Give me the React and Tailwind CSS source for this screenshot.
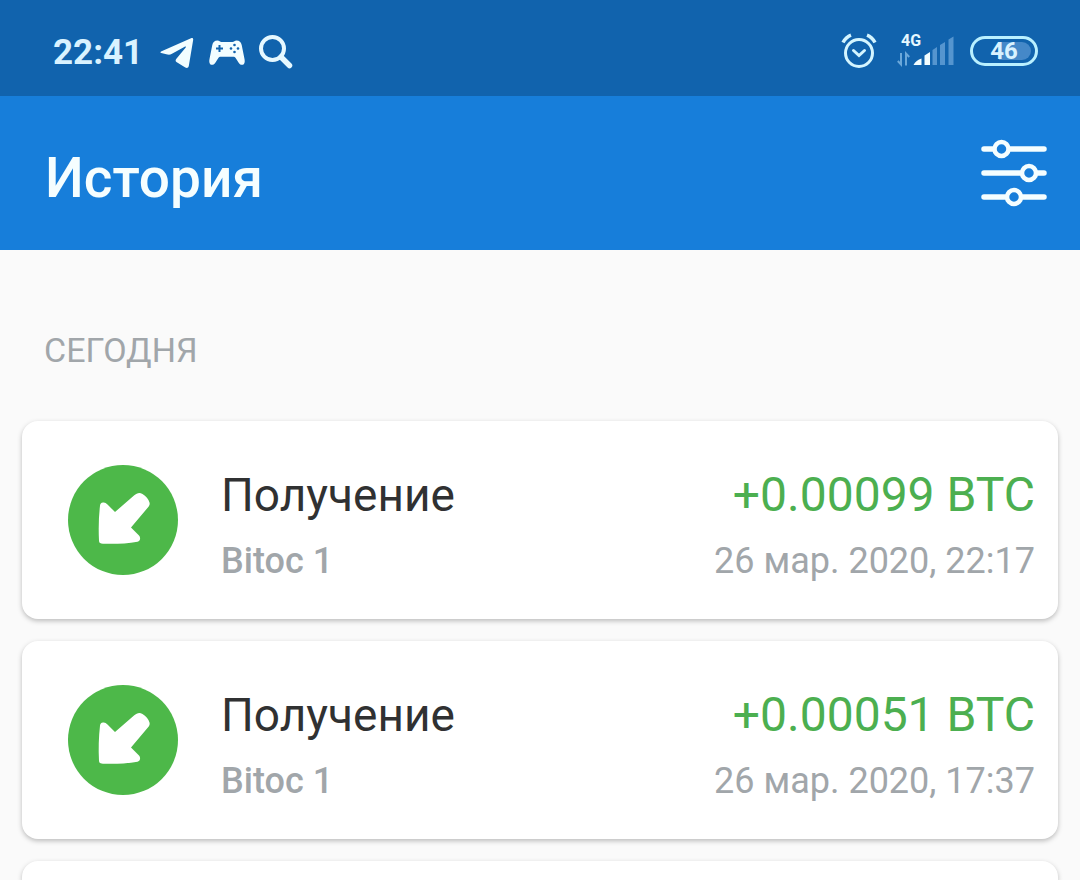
const transactions = [
  { id: 1, title: 'Получение', wallet: 'Bitoc 1', amount: '+0.00099 BTC', date: '26 мар. 2020, 22:17' },
  { id: 2, title: 'Получение', wallet: 'Bitoc 1', amount: '+0.00051 BTC', date: '26 мар. 2020, 17:37' },
]

function TelegramIcon() {
  return (
    <svg className="h-8 w-9" viewBox="0 0 36 32" fill="#f2fdff" aria-hidden="true">
      <path d="M1 14.500 31 1.200c1.500-.6 2.300 0 2.200 1.600L28.800 29c-.4 1.900-1.900 2.400-3.500 1.500l-8.500-5.200c-1.500-1-1.500-2.200-.4-3.600l9.300-11.200c.5-.9-.1-1.300-1-.8L12 16.700c-1.500 1-3 1.200-4.600.9L1.200 16.100c-1-.3-1-1.200-.2-1.600Z" />
    </svg>
  )
}

function GamepadIcon() {
  return (
    <svg className="h-8 w-9" viewBox="0 0 36 32" aria-hidden="true">
      <path
        fill="#f2fdff"
        d="M8.500 3.500c1.800 0 2.500 1.500 4 1.500h11c1.500 0 2.200-1.500 4-1.500 3 0 4.500 1.500 5.200 4.500L35.500 22c.8 4-.5 5.800-2.500 5.800-1.600 0-2.500-.8-3.500-2.300l-2.700-4.300c-.7-1-1.500-1.400-2.600-1.400H11.800c-1.100 0-1.900.4-2.600 1.400l-2.700 4.300C5.500 27 4.600 27.800 3 27.800c-2 0-3.300-1.800-2.500-5.800L3.300 8c.7-3 2.200-4.500 5.200-4.500Z"
      />
      <path d="M10.500 8v7M7 11.500h7" stroke="#1163ad" strokeWidth="2" />
      <g fill="#1163ad">
        <circle cx="25.500" cy="8" r="1.300" />
        <circle cx="25.500" cy="15" r="1.300" />
        <circle cx="22" cy="11.500" r="1.300" />
        <circle cx="29" cy="11.500" r="1.300" />
      </g>
    </svg>
  )
}

function SearchIcon() {
  return (
    <svg className="h-9 w-9" viewBox="0 0 36 36" fill="none" stroke="#e6f8ff" aria-hidden="true">
      <circle cx="14.500" cy="13.500" r="11.500" strokeWidth="4" />
      <path d="m23 22 8.500 8.500" strokeWidth="5.500" strokeLinecap="round" />
    </svg>
  )
}

function AlarmIcon() {
  return (
    <svg className="h-9 w-9" viewBox="0 0 36 36" fill="none" stroke="#d4f5ff" strokeWidth="3" aria-hidden="true">
      <circle cx="18" cy="20" r="13.500" />
      <path d="M12.500 17.500 18 22.500l5.500-5" strokeLinecap="round" />
      <path d="M2 9.500C4 6 6.500 3.500 10 2.200M34 9.500C32 6 29.500 3.500 26 2.200" strokeWidth="3.500" />
    </svg>
  )
}

function SignalIcon() {
  return (
    <div className="relative mr-[15px] ml-5">
      <svg className="h-9 w-[58px]" viewBox="0 0 58 36" aria-hidden="true">
        <path d="M4 20v11.500L.8 28M9 32.500V20.500l3.200 3.500" fill="none" stroke="#6ba8da" strokeWidth="2" />
        <path d="M16.500 32c1.500-3 4.500-5.500 8-6.500V32Z" fill="#f2fdff" />
        <path d="M27.500 22.500 33 19v13h-5.500Z" fill="#f2fdff" />
        <path d="m35.500 17 4.500-3v18h-4.500ZM43 12l5-3v23h-5ZM51.500 6.500l5-3V32h-5Z" fill="#5595cf" />
      </svg>
      <span className="absolute -top-1 left-1 text-base leading-6 font-bold text-[#e6f8ff]">4G</span>
    </div>
  )
}

function FilterIcon() {
  return (
    <svg className="h-[72px] w-[72px]" viewBox="0 0 72 72" stroke="#f5feff" strokeWidth="5.500" strokeLinecap="round" aria-hidden="true">
      <path d="M6 13h60M6 37h60M6 61h60" />
      <g fill="#177eda" strokeWidth="4.500">
        <circle cx="23.500" cy="13" r="7" />
        <circle cx="51" cy="37" r="7" />
        <circle cx="36" cy="61" r="7" />
      </g>
    </svg>
  )
}

function ReceiveIcon() {
  return (
    <svg className="h-[110px] w-[110px] shrink-0" viewBox="0 0 110 110" aria-hidden="true">
      <circle cx="55" cy="55" r="55" fill="#4db849" />
      <path
        fill="#fff"
        d="M35 37.500c1.500-.4 3 .3 4.500 2l7.500 7.500L66 30.500c3-2.500 5.500-3.300 8.500-1.500 3.500 2 6 5 7 8.500.5 1.800 0 3-1.200 4.500L63 62.500l8 8c1.800 2 1.500 5.500-1.500 6.200-11 2-22 2.300-34.500 2-2.500 0-4-.8-4-3-.6-12-.3-24 1-35 .2-1.800 1-2.900 3-3.200Z"
      />
    </svg>
  )
}

function StatusBar() {
  return (
    <div className="flex h-24 shrink-0 items-center justify-between bg-[#1163ad] pt-1.5 pr-[42px] pl-[53px] text-[#d9f2ff]">
      <div className="flex items-center gap-[13px] pt-[3px]">
        <span className="mr-1 text-[35px] leading-10 font-bold">22:41</span>
        <TelegramIcon />
        <GamepadIcon />
        <SearchIcon />
      </div>
      <div className="flex items-center">
        <AlarmIcon />
        <SignalIcon />
        <div className="relative flex h-[30px] w-[68px] items-center justify-center rounded-full border-3 border-[#b9f0ff]">
          <span className="absolute right-1 h-[18px] w-8 rounded-r-full bg-[#4588c8]" />
          <span className="relative text-2xl font-bold">46</span>
        </div>
      </div>
    </div>
  )
}

function TransactionCard({ title, wallet, amount, date }) {
  return (
    <li className="flex shrink-0 rounded-2xl bg-white pt-11 pr-[23px] pb-[22px] pl-[46px] shadow-[0_2px_5px_rgba(0,0,0,0.25)]">
      <ReceiveIcon />
      <div className="ml-[43px] flex grow justify-between">
        <div>
          <p className="text-[46px] leading-[60px] text-[#303132]">{title}</p>
          <p className="text-4xl leading-[72px] font-medium text-[#a1a6aa]">{wallet}</p>
        </div>
        <div className="text-right">
          <p className="text-5xl leading-[60px] text-[#4caf50]">{amount}</p>
          <p className="text-4xl leading-[72px] text-[#a1a6aa]">{date}</p>
        </div>
      </div>
    </li>
  )
}

export default function App() {
  return (
    <div className="flex h-screen flex-col overflow-hidden bg-[#fafafa] font-[Roboto,sans-serif]">
      <StatusBar />
      <header className="flex shrink-0 items-center justify-between bg-[#177eda] pt-10 pr-[30px] pb-[42px] pl-[45px]">
        <h1 className="pt-3 text-[55px] leading-[60px] font-medium text-[#f5feff]">История</h1>
        <button type="button" aria-label="Фильтр">
          <FilterIcon />
        </button>
      </header>
      <main className="flex grow flex-col px-[22px]">
        <h2 className="px-[22px] pt-20 pb-[51px] text-[34px] leading-10 text-[#a1a6aa]">СЕГОДНЯ</h2>
        <ul className="flex grow flex-col gap-[22px]">
          {transactions.map((tx) => (
            <TransactionCard key={tx.id} {...tx} />
          ))}
          <li className="grow rounded-t-2xl bg-white shadow-[0_2px_5px_rgba(0,0,0,0.25)]" />
        </ul>
      </main>
    </div>
  )
}
